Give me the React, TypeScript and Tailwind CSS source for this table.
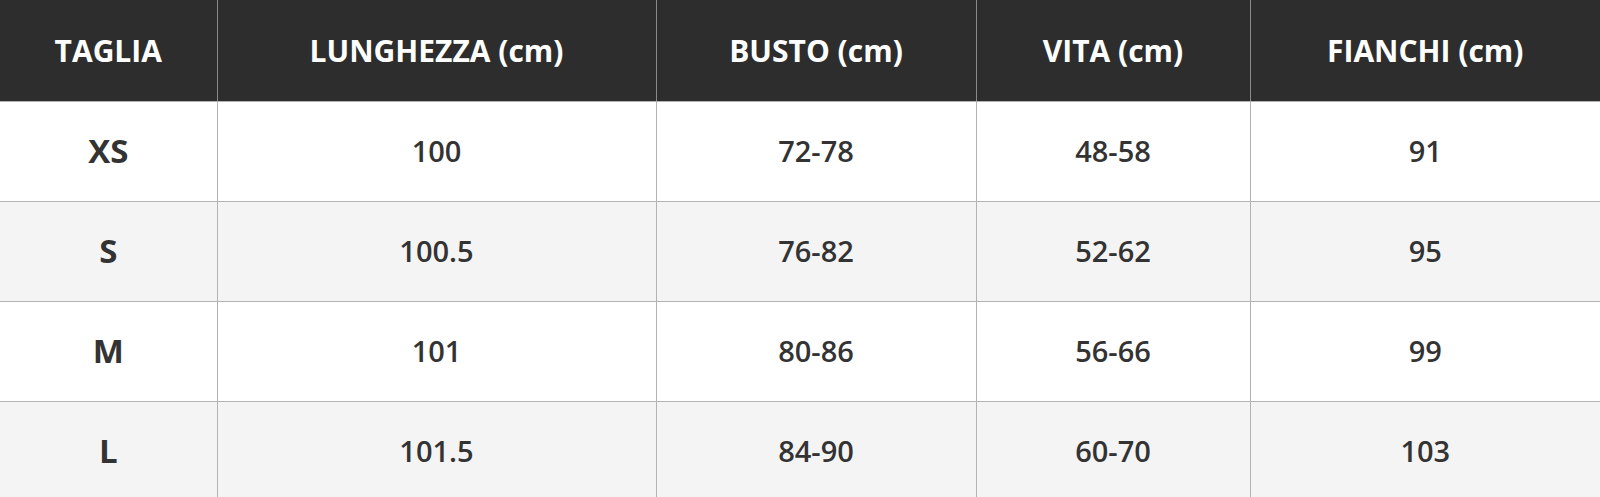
import React from "react";

const headers = ["TAGLIA", "LUNGHEZZA (cm)", "BUSTO (cm)", "VITA (cm)", "FIANCHI (cm)"];

const rows = [
  ["XS", "100", "72-78", "48-58", "91"],
  ["S", "100.5", "76-82", "52-62", "95"],
  ["M", "101", "80-86", "56-66", "99"],
  ["L", "101.5", "84-90", "60-70", "103"],
];

export default function App() {
  return (
    <div className="w-[1600px] h-[497px] overflow-hidden bg-white font-['Open_Sans',sans-serif]">
      <table className="w-full table-fixed border-collapse">
        <colgroup>
          <col className="w-[217px]" />
          <col className="w-[439px]" />
          <col className="w-[320px]" />
          <col className="w-[274px]" />
          <col />
        </colgroup>
        <thead>
          <tr className="h-[101px] bg-[#2d2d2d]">
            {headers.map((h, i) => (
              <th
                key={h}
                className={`text-center align-middle text-[30px] font-bold text-white border-b border-[#b3b3b3] ${i > 0 ? "border-l border-l-[#8a8a8a]" : ""}`}
              >
                {h}
              </th>
            ))}
          </tr>
        </thead>
        <tbody>
          {rows.map((row, r) => (
            <tr key={row[0]} className={`h-[100px] ${r % 2 === 1 ? "bg-[#f4f4f4]" : "bg-white"}`}>
              {row.map((cell, i) => (
                <td
                  key={i}
                  className={`text-center align-middle text-[#333333] border-b border-[#b3b3b3] ${i > 0 ? "border-l" : ""} ${
                    i === 0 ? "text-[33px] font-bold" : "text-[29px] font-[550]"
                  }`}
                >
                  {cell}
                </td>
              ))}
            </tr>
          ))}
        </tbody>
      </table>
    </div>
  );
}
